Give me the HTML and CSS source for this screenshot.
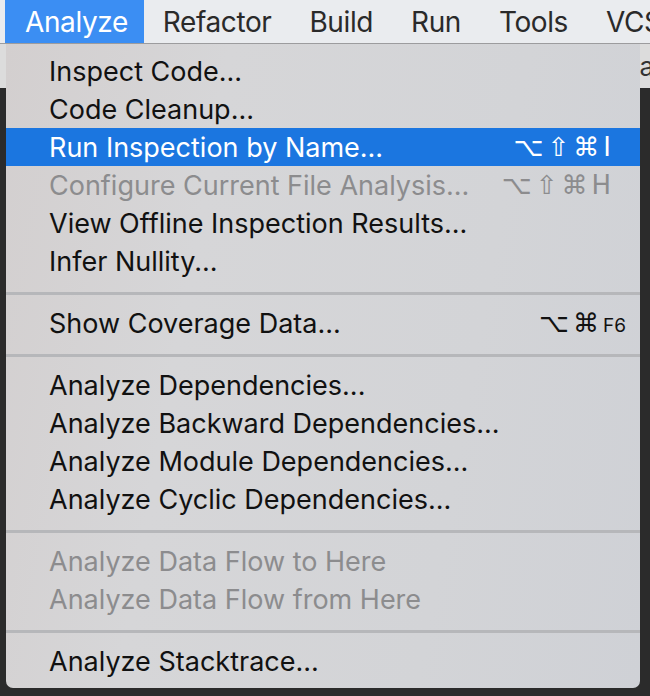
FILE: index.html
```html
<!DOCTYPE html>
<html>
<head>
<meta charset="utf-8">
<link rel="stylesheet" href="styles.css">
</head>
<body>
<div class="menubar">
  <div class="mb-item active">Analyze</div>
  <div class="mb-item">Refactor</div>
  <div class="mb-item">Build</div>
  <div class="mb-item">Run</div>
  <div class="mb-item">Tools</div>
  <div class="mb-item">VCS</div>
</div>
<div class="workspace">
  <div class="toolbar"><span class="tb-text">ar</span></div>
  <div class="editor"></div>
</div>
<div class="menu">
  <div class="group">
    <div class="row">Inspect Code...</div>
    <div class="row">Code Cleanup...</div>
    <div class="row selected"><span>Run Inspection by Name...</span><span class="key">⌥⇧⌘I</span></div>
    <div class="row disabled"><span>Configure Current File Analysis...</span><span class="key">⌥⇧⌘H</span></div>
    <div class="row">View Offline Inspection Results...</div>
    <div class="row">Infer Nullity...</div>
  </div>
  <div class="sep"></div>
  <div class="group">
    <div class="row wide"><span>Show Coverage Data...</span><span class="key">⌥⌘<small>F6</small></span></div>
  </div>
  <div class="sep"></div>
  <div class="group">
    <div class="row">Analyze Dependencies...</div>
    <div class="row">Analyze Backward Dependencies...</div>
    <div class="row">Analyze Module Dependencies...</div>
    <div class="row">Analyze Cyclic Dependencies...</div>
  </div>
  <div class="sep"></div>
  <div class="group">
    <div class="row disabled">Analyze Data Flow to Here</div>
    <div class="row disabled">Analyze Data Flow from Here</div>
  </div>
  <div class="sep"></div>
  <div class="group">
    <div class="row">Analyze Stacktrace...</div>
  </div>
</div>
</body>
</html>
```
FILE: styles.css
```css
html, body {
  margin: 0;
  padding: 0;
}
body {
  width: 650px;
  height: 696px;
  overflow: hidden;
  background: #232323;
  font-family: "Inter", "Liberation Sans", sans-serif;
  position: relative;
}
.menubar {
  height: 43px;
  background: #eaecef;
  border-bottom: 1px solid #9c9c9e;
  display: flex;
  padding-left: 5px;
  font-size: 28px;
  color: #2a2a2a;
  white-space: nowrap;
  overflow: hidden;
}
.mb-item {
  display: flex;
  align-items: center;
  padding: 0 19px;
  height: 43px;
  letter-spacing: -0.4px;
}
.mb-item.active {
  background: #3b8ef3;
  color: #fff;
  padding: 0 16px 0 20px;
}
.workspace {
  display: flex;
  flex-direction: column;
}
.toolbar {
  height: 44px;
  background: #dcdcdc;
  display: flex;
  justify-content: flex-end;
  align-items: center;
  font-size: 26px;
  color: #333;
  overflow: hidden;
}
.tb-text {
  margin-right: -14px;
}
.editor {
  height: 608px;
  background: #2b2b2b;
}
.menu {
  position: absolute;
  left: 6px;
  top: 44px;
  width: 634px;
  height: 644px;
  border-radius: 0 0 7px 7px;
  background: linear-gradient(100deg, #d3cfcf 0%, #d6d6d8 30%, #d3d4d7 70%, #cfd1d6 100%);
  display: flex;
  flex-direction: column;
  padding-top: 8px;
  box-sizing: border-box;
  font-size: 27px;
  color: #111;
  white-space: nowrap;
}
.group {
  display: flex;
  flex-direction: column;
}
.row {
  height: 38px;
  display: flex;
  align-items: center;
  justify-content: space-between;
  padding: 0 29px 0 43px;
  letter-spacing: 0;
}
.row.wide {
  padding-right: 18px;
}
.row.selected {
  background: #1b76e0;
  color: #fff;
}
.row.disabled {
  color: #8c8c8e;
}
.key {
  letter-spacing: 4px;
  font-family: "DejaVu Sans", sans-serif;
  font-size: 26px;
  margin-right: -4px;
}
.key small {
  font-family: "Inter", "Liberation Sans", sans-serif;
  font-size: 19px;
  letter-spacing: 0;
}
.sep {
  height: 3px;
  background: #b6b7ba;
  margin: 12px 0 9px;
}
```
